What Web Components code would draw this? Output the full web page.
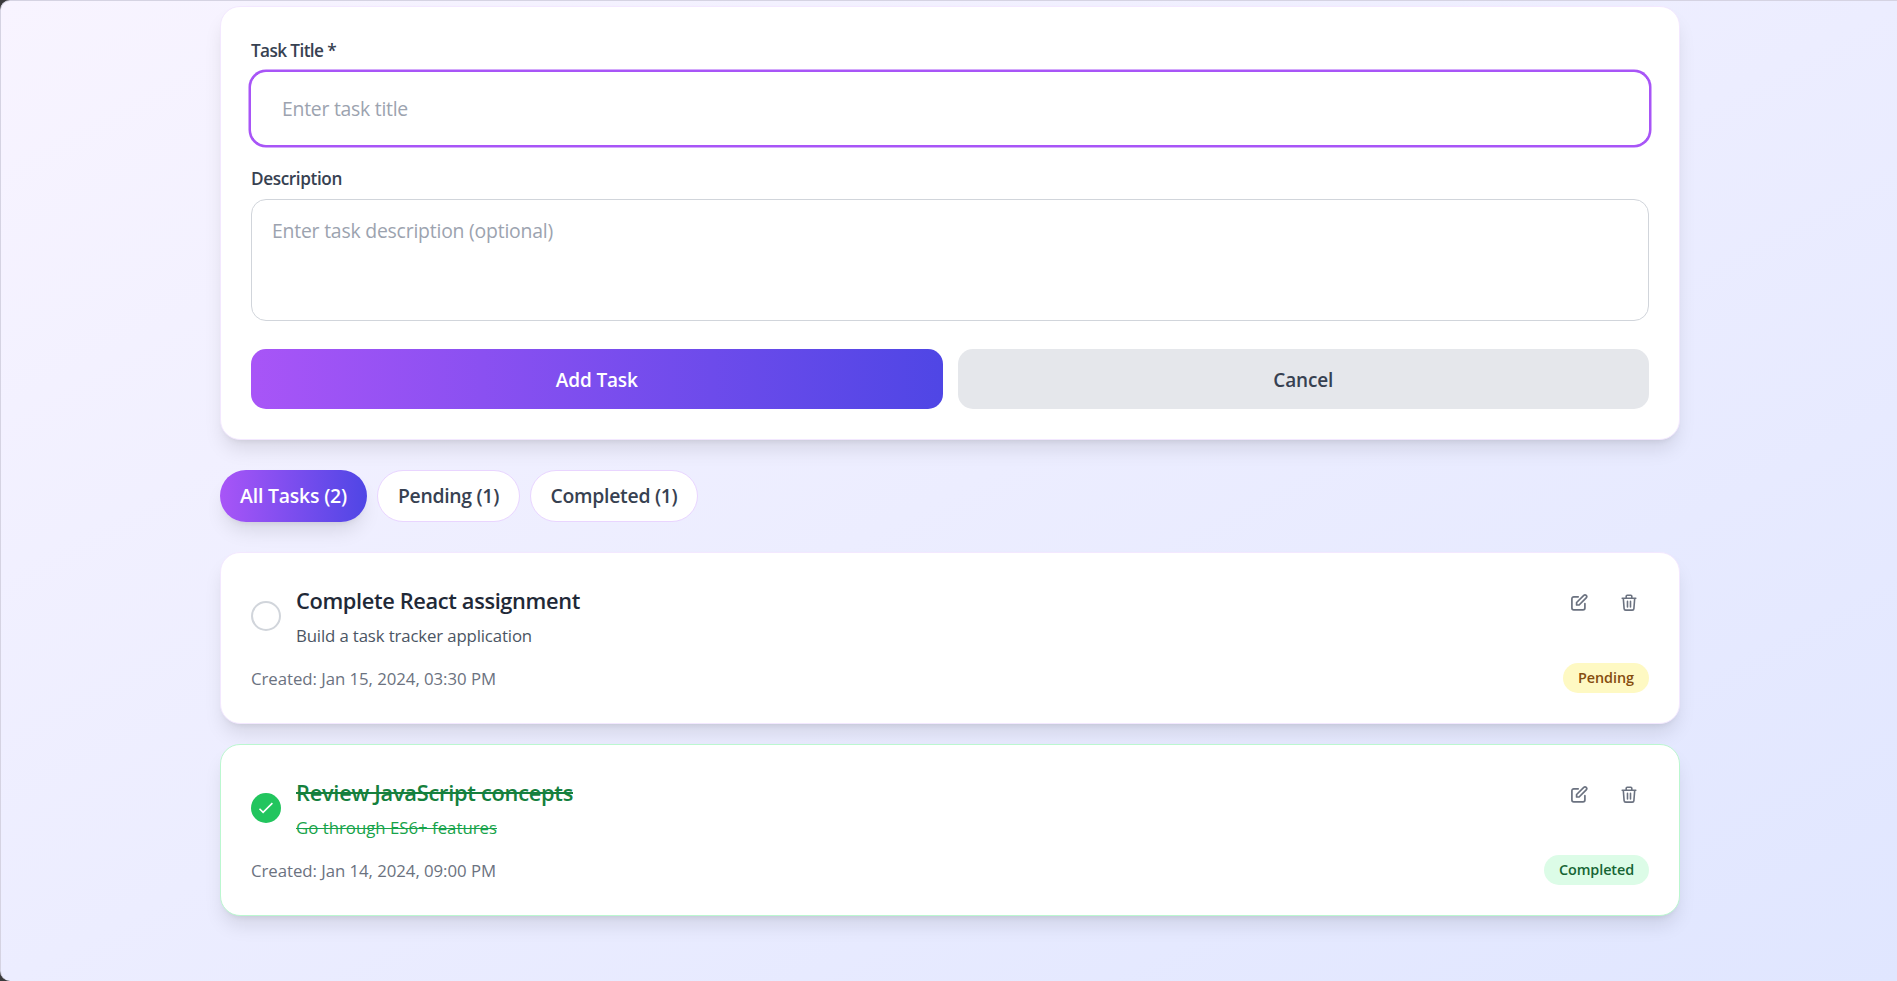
<!DOCTYPE html>
<html lang="en">
<head>
<meta charset="utf-8">
<title>Task Tracker</title>
<style>
html,body{margin:0;height:100%;background:#3a3a3c;overflow:hidden}
body{font-family:"Open Sans","Noto Sans",sans-serif;color:#374151}
</style>
</head>
<body>
<task-app></task-app>
<script>
const define = (name, html, after) => customElements.define(name, class extends HTMLElement {
  connectedCallback() {
    if (this.shadowRoot) return;
    this.attachShadow({mode: 'open'}).innerHTML = html;
    if (after) after.call(this, this.shadowRoot);
  }
});

/* One line of text whose tracking is tuned to a given advance width. */
define('fit-text', `<style>:host{display:block;white-space:nowrap;width:max-content}span{display:inline-block;text-decoration:var(--deco,none);text-decoration-thickness:var(--deco-size,auto)}</style><span><slot></slot></span>`, function (root) {
  const s = root.querySelector('span'), w = +this.getAttribute('w'), n = this.textContent.length;
  const natural = s.getBoundingClientRect().width;
  s.style.letterSpacing = ((w - natural) / n).toFixed(3) + 'px';
});

define('panel-card', `<style>
:host{display:block;box-sizing:border-box;background:#fff;border:1px solid var(--edge,#f3e8ff);border-radius:20px;
box-shadow:0 12.5px 18.75px -3.75px rgba(0,0,0,.1),0 5px 7.5px -5px rgba(0,0,0,.1)}
</style><slot></slot>`);

define('form-field', `<style>
:host{display:block}
.label{font-size:17.2px;font-weight:600;line-height:25px;padding-top:1px;color:#374151}
.box{box-sizing:border-box;background:#fff;border-radius:15px;font-size:19.4px;color:#9ca3af;display:flex}
.title .box{height:73px;margin-top:8.5px;padding:0 30px;align-items:center;border:1px solid #fff;box-shadow:0 0 0 2.5px #a855f7}
.desc .box{height:122px;margin-top:8px;padding:17px 20px;border:1px solid #d1d5db;line-height:28px}
</style><div class="wrap"><div class="label"><slot name="label"></slot></div><div class="box"><slot></slot></div></div>`,
function (root) { root.querySelector('.wrap').classList.add(this.getAttribute('kind')); });

define('action-button', `<style>
:host{display:flex;align-items:center;justify-content:center;box-sizing:border-box;height:60px;padding-top:2px;border-radius:15px;font-size:19px;font-weight:600;color:#374151;background:#e5e7eb}
:host([primary]){color:#fff;background:linear-gradient(to right,#a855f7,#4f46e5)}
</style><slot></slot>`);

define('filter-tab', `<style>
:host{display:flex;align-items:center;justify-content:center;box-sizing:border-box;height:52px;border-radius:26px;border:1px solid #e9d5ff;background:#fff;font-size:19.4px;font-weight:600;color:#374151}
:host([active]){border:0;color:#fff;background:linear-gradient(to right,#a855f7,#4f46e5);box-shadow:0 12.5px 18.75px -3.75px rgba(0,0,0,.1),0 5px 7.5px -5px rgba(0,0,0,.1)}
</style><slot></slot>`);

define('status-badge', `<style>
:host{display:flex;align-items:center;justify-content:center;height:30px;border-radius:15px;font-size:14.4px;font-weight:600;color:#854d0e;background:#fef9c3}
:host([done]){color:#166534;background:#dcfce7}
</style><slot></slot>`);

define('check-circle', `<style>
:host{display:flex;align-items:center;justify-content:center;box-sizing:border-box;width:30px;height:30px;border:2px solid #d1d5db;border-radius:50%}
:host([done]){border:0;background:#22c55e}
svg{display:none}:host([done]) svg{display:block}
</style><svg width="20" height="20" viewBox="0 0 20 20" fill="none" stroke="#fff" stroke-width="1.6"><path d="M3.5 10.8l3.6 3.6 9.3-9.3"/></svg>`);

define('edit-icon', `<style>:host{display:block;width:20px;height:20px}svg{display:block}</style>
<svg width="20" height="20" viewBox="0 0 20 20" fill="none" stroke="#6b7280" stroke-width="1.7" stroke-linecap="round" stroke-linejoin="round"><path d="M9.200 3.800H4.800A1.900 1.900 0 0 0 2.900 5.700V14.900A1.900 1.900 0 0 0 4.800 16.800H14A1.900 1.900 0 0 0 15.900 14.900V10.700M7.600 12V9.500L14.800 2.400a1.650 1.650 0 0 1 2.400 2.400L10.100 12z"/></svg>`);

define('trash-icon', `<style>:host{display:block;width:20px;height:20px}svg{display:block}</style>
<svg width="20" height="20" viewBox="0 0 20 20" fill="none" stroke="#6b7280" stroke-width="1.6" stroke-linejoin="round" stroke-linecap="round"><path d="M3.200 5.300H16.800M4.300 5.300l.8 10.300a1.600 1.600 0 0 0 1.600 1.500h6.600a1.600 1.600 0 0 0 1.600-1.500l.8-10.300M7.200 5.300V3.300a1 1 0 0 1 1-1h3.600a1 1 0 0 1 1 1v2M8.500 8.400v5.600M11.500 8.400v5.600"/></svg>`);

define('task-item', `<style>
:host{display:block}
panel-card{height:172px;padding:31px 30px 0}
.top{display:flex;gap:15px;height:62px}
check-circle{margin-top:17px}
.text{flex:1}
.name{font-size:21.8px;font-weight:600;line-height:35px;margin-top:-1px;color:#1f2937}
.info{font-size:16.800px;line-height:25px;margin-top:5px;color:#4b5563}
.icons{display:flex;gap:30px;padding:9px 10px 0 0}
.bottom{display:flex;justify-content:space-between;align-items:center;margin-top:17px;height:30px}
.date{font-size:16.800px;line-height:30px;color:#6b7280;padding-top:2px}
:host([done]) panel-card{--edge:#bbf7d0}
:host([done]) .text{--deco:line-through}
:host([done]) .name{color:#15803d;--deco-size:2px}
:host([done]) .info{color:#16a34a;--deco-size:1px}
</style>
<panel-card><div class="top"><check-circle></check-circle><div class="text"><div class="name"><slot name="name"></slot></div><div class="info"><slot name="info"></slot></div></div>
<div class="icons"><edit-icon></edit-icon><trash-icon></trash-icon></div></div>
<div class="bottom"><div class="date"><slot name="date"></slot></div><slot name="badge"></slot></div></panel-card>`,
function (root) { if (this.hasAttribute('done')) root.querySelector('check-circle').setAttribute('done', ''); });

define('task-app', `<style>
:host{display:block;box-sizing:border-box;height:981px;padding:5px 217px 0 219px;border-top:1px solid #d5d3e2;border-left:1px solid #d5d3e2;border-radius:10px 0 0 10px;background:linear-gradient(to bottom right,#f8f4ff,#e0e6ff)}
.form{height:434px;padding:30px 30px 0}
.second{margin-top:20.5px}
.buttons{display:grid;grid-template-columns:1fr 1fr;gap:15px;margin-top:27.500px}
.tabs{display:flex;gap:10px;margin:29.500px 0 30px}
.list{display:grid;gap:20px}
</style>
<panel-card class="form">
<form-field kind="title"><fit-text slot="label" w="85">Task Title *</fit-text><fit-text w="126">Enter task title</fit-text></form-field>
<form-field class="second" kind="desc"><fit-text slot="label" w="91">Description</fit-text><fit-text w="281">Enter task description (optional)</fit-text></form-field>
<div class="buttons"><action-button primary><fit-text w="82">Add Task</fit-text></action-button><action-button><fit-text w="60">Cancel</fit-text></action-button></div>
</panel-card>
<div class="tabs">
<filter-tab active style="width:147px"><fit-text w="107">All Tasks (2)</fit-text></filter-tab>
<filter-tab style="width:143px"><fit-text w="101">Pending (1)</fit-text></filter-tab>
<filter-tab style="width:168px"><fit-text w="127">Completed (1)</fit-text></filter-tab>
</div>
<div class="list">
<task-item><fit-text slot="name" w="284">Complete React assignment</fit-text><fit-text slot="info" w="236">Build a task tracker application</fit-text><fit-text slot="date" w="245">Created: Jan 15, 2024, 03:30 PM</fit-text><status-badge slot="badge" style="width:86px"><fit-text w="56">Pending</fit-text></status-badge></task-item>
<task-item done><fit-text slot="name" w="277">Review JavaScript concepts</fit-text><fit-text slot="info" w="201">Go through ES6+ features</fit-text><fit-text slot="date" w="245">Created: Jan 14, 2024, 09:00 PM</fit-text><status-badge slot="badge" done style="width:105px"><fit-text w="75">Completed</fit-text></status-badge></task-item>
</div>`);
</script>
</body>
</html>
